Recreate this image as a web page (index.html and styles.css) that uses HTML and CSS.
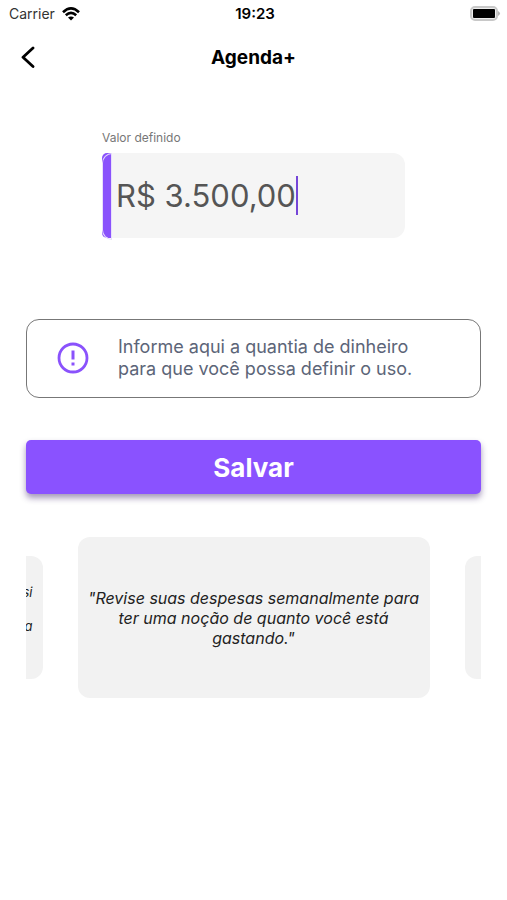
FILE: index.html
```html
<!DOCTYPE html>
<html lang="pt-BR">
<head>
<meta charset="utf-8">
<meta name="viewport" content="width=device-width, initial-scale=1">
<title>Agenda+</title>
<link rel="stylesheet" href="styles.css">
</head>
<body>
<div class="status">
  <div class="carrier">
    <span>Carrier</span>
    <svg width="18" height="14" viewBox="0 0 18 14" fill="none" stroke="#000" stroke-width="2.6" aria-hidden="true">
      <path d="M1 5.2Q9-2.4 17 5.2"/>
      <path d="M3.8 8.3Q9 3.6 14.2 8.3"/>
      <path d="M9 13.6L6 10.6Q9 8.2 12 10.6Z" fill="#000" stroke="none"/>
    </svg>
  </div>
  <time class="clock">19:23</time>
  <svg class="battery" width="31" height="15" viewBox="0 0 31 15" aria-hidden="true">
    <rect x="1" y="1" width="26" height="13" rx="4" fill="#eee" stroke="#c8c8c8" stroke-width="2"/>
    <rect x="3" y="3" width="22" height="9" rx="1" fill="#000"/>
    <path d="M28 5Q32 7.500 28 10Z" fill="#b5b5b5"/>
  </svg>
</div>
<header class="header">
  <button class="back" type="button" aria-label="Voltar">
    <svg width="14" height="22" viewBox="0 0 14 22" fill="none" stroke="#000" stroke-width="2.8" stroke-linecap="round" stroke-linejoin="round" aria-hidden="true"><path d="M12 2L2 11.200L12 20.500"/></svg>
  </button>
  <h1 class="title">Agenda+</h1>
</header>
<main class="content">
  <form class="form">
    <div class="amount">
      <label class="amount-label" for="valor">Valor definido</label>
      <div class="field">
        <span class="accent"></span>
        <input class="amount-input" id="valor" type="text" size="9" value="R$ 3.500,00">
        <span class="caret"></span>
      </div>
    </div>
    <div class="notice">
      <svg class="notice-icon" width="32" height="32" viewBox="0 0 32 32" fill="none" stroke="#8a52fc" aria-hidden="true">
        <circle cx="16" cy="16" r="14" stroke-width="2.800"/>
        <path d="M16 8.500V17.500M16 20.500V23.500" stroke-width="3"/>
      </svg>
      <p class="notice-text">Informe aqui a quantia de dinheiro para que você possa definir o uso.</p>
    </div>
    <button class="save" type="submit">Salvar</button>
  </form>
  <section class="carousel" aria-label="Dicas">
    <div class="slide side previous"><p>si<br><br>a</p></div>
    <div class="slide"><p>"Revise suas despesas semanalmente para ter uma noção de quanto você está gastando."</p></div>
    <div class="slide side"></div>
  </section>
</main>
</body>
</html>
```
FILE: styles.css
```css
* {
  box-sizing: border-box;
}

body {
  margin: 0;
  background: #fff;
  color: #000;
  font-family: Inter, "Liberation Sans", sans-serif;
}

h1,
p {
  margin: 0;
}

.status {
  display: grid;
  grid-template-columns: 1fr auto 1fr;
  align-items: center;
  height: 27px;
  padding: 0 6px 0 9px;
  font-size: 14px;
}

.carrier {
  display: flex;
  align-items: center;
  gap: 7px;
  color: #333;
}

.clock {
  font-size: 15px;
  font-weight: 600;
}

.battery {
  justify-self: end;
}

.header {
  display: grid;
  grid-template-columns: 28px 1fr 28px;
  align-items: center;
  height: 60px;
  padding: 0 14px;
}

.back {
  display: flex;
  justify-content: center;
  padding: 0;
  border: 0;
  background: none;
}

.title {
  font-size: 19px;
  font-weight: 700;
  text-align: center;
}

.content {
  padding: 41px 26px;
}

.amount {
  width: 67%;
  max-width: 303px;
  margin: 0 auto;
}

.amount-label {
  display: block;
  margin-bottom: 5px;
  color: #777;
  font-size: 12px;
  line-height: 20px;
}

.field {
  display: flex;
  align-items: center;
  height: 85px;
  border-radius: 12px;
  background: #f5f5f5;
}

.accent {
  flex: none;
  align-self: stretch;
  width: 10px;
  border-radius: 5px 0 0 5px;
  background: #8a52fc;
}

.accent::before {
  content: "";
  display: block;
  height: 100%;
  border: 1px solid #e8defc;
  border-radius: 10px 0 0 10px;
}

.amount-input {
  field-sizing: content;
  padding: 0 0 0 4px;
  border: 0;
  outline: 0;
  background: transparent;
  color: #555;
  font: 31px Inter, "Liberation Sans", sans-serif;
}

.caret {
  width: 2px;
  height: 39px;
  background: #7546d8;
}

.notice {
  display: flex;
  align-items: center;
  gap: 29px;
  height: 79px;
  margin-top: 81px;
  padding: 0 60px 2px 30px;
  border: 1px solid #777;
  border-radius: 13px;
}

.notice-icon {
  flex: none;
}

.notice-text {
  color: #5c6578;
  font-size: 18px;
  line-height: 22px;
}

.save {
  display: block;
  width: 100%;
  height: 54px;
  margin-top: 42px;
  border: 0;
  border-radius: 5px;
  background: #8a52ff;
  box-shadow: 0 4px 6px rgb(50 25 100 / 45%);
  color: #fff;
  font: 700 26px Inter, "Liberation Sans", sans-serif;
}

.carousel {
  display: flex;
  align-items: center;
  justify-content: center;
  gap: 35px;
  margin-top: 43px;
  overflow: hidden;
}

.slide {
  display: flex;
  flex: 0 0 352px;
  align-items: center;
  justify-content: center;
  height: 161px;
  padding: 0 10px;
  border-radius: 12px;
  background: #f2f2f2;
  color: #222;
  font-size: 16px;
  font-style: italic;
  line-height: 20px;
  text-align: center;
}

.side {
  flex-basis: 268px;
  height: 123px;
  font-size: 13px;
  line-height: 17px;
}

.previous {
  align-items: flex-start;
  justify-content: flex-end;
  padding-top: 28px;
  text-align: right;
}
```
